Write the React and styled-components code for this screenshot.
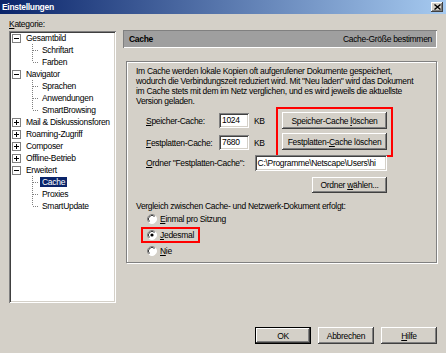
import React from "react"
import styled, { createGlobalStyle } from "styled-components"

const GlobalStyle = createGlobalStyle`
html, body {
  margin: 0;
  padding: 0;
  background: #d4d0c8;
}
body {
  font-family: "Liberation Sans", Arial, sans-serif;
  font-size: 8.5px;
  letter-spacing: -0.3px;
  color: #000;
}
* { box-sizing: border-box; }
`

const sunken = `
box-shadow: inset 1px 1px #808080, inset -1px -1px #fff, inset 2px 2px #404040, inset -2px -2px #d4d0c8;
`
const raised = `
box-shadow: inset -1px -1px #404040, inset 1px 1px #fff, inset -2px -2px #808080, inset 2px 2px #d4d0c8;
`

const tree = [
    { label: "Gesamtbild", open: true, children: ["Schriftart", "Farben"] },
    { label: "Navigator", open: true, children: ["Sprachen", "Anwendungen", "SmartBrowsing"] },
    { label: "Mail & Diskussionsforen" },
    { label: "Roaming-Zugriff" },
    { label: "Composer" },
    { label: "Offline-Betrieb" },
    { label: "Erweitert", open: true, children: ["Cache", "Proxies", "SmartUpdate"] },
]

const Expander = ({ open }) => (
    <svg width="9" height="9" viewBox="0 0 9 9">
        <rect x="0.5" y="0.5" width="8" height="8" fill="#fff" stroke="#808080" />
        <line x1="2" y1="4.5" x2="7" y2="4.5" stroke="#000" />
        {!open && <line x1="4.5" y1="2" x2="4.5" y2="7" stroke="#000" />}
    </svg>
)

const Branch = ({ last }) => (
    <svg width="8" height="12" viewBox="0 0 8 12">
        <line x1="0.5" y1="0" x2="0.5" y2={last ? 6 : 12} stroke="#808080" strokeDasharray="1 1" />
        <line x1="1" y1="6.5" x2="6" y2="6.5" stroke="#808080" strokeDasharray="1 1" />
    </svg>
)

const Radio = ({ checked }) => (
    <svg width="10" height="10" viewBox="0 0 10 10">
        <circle cx="5" cy="5" r="4.5" fill="#fff" />
        <path d="M1.8 8.2 A4.5 4.5 0 0 1 8.2 1.8" fill="none" stroke="#808080" />
        <path d="M2.5 7.5 A3.5 3.5 0 0 1 7.5 2.5" fill="none" stroke="#404040" />
        <path d="M8.2 1.8 A4.5 4.5 0 0 1 1.8 8.2" fill="none" stroke="#fff" />
        {checked && <circle cx="5" cy="5" r="1.6" fill="#000" />}
    </svg>
)

const App = () => {
    return (
        <>
            <GlobalStyle />
            <Window>
                <TitleBar>
                    <TitleText>Einstellungen</TitleText>
                    <CloseButton>
                        <svg width="7" height="6" viewBox="0 0 7 6">
                            <path d="M0.5 0.5 L6.5 5.5 M6.5 0.5 L0.5 5.5" stroke="#000" strokeWidth="1.4" />
                        </svg>
                    </CloseButton>
                </TitleBar>
                <Main>
                    <LeftColumn>
                        <CategoryLabel><U>K</U>ategorie:</CategoryLabel>
                        <TreeBox>
                            {tree.map(node => (
                                <React.Fragment key={node.label}>
                                    <TreeRow>
                                        <Expander open={node.open} />
                                        <TreeText>{node.label}</TreeText>
                                    </TreeRow>
                                    {node.open && node.children.map((child, i) => (
                                        <TreeRow key={child} $child>
                                            <Branch last={i === node.children.length - 1} />
                                            <TreeText $child $selected={child === "Cache"}>{child}</TreeText>
                                        </TreeRow>
                                    ))}
                                </React.Fragment>
                            ))}
                        </TreeBox>
                    </LeftColumn>
                    <RightColumn>
                        <PanelHeader>
                            <HeaderTitle>Cache</HeaderTitle>
                            <span>Cache-Größe bestimmen</span>
                        </PanelHeader>
                        <GroupBox>
                            <Fields>
                                <Description>
                                    <Line>Im Cache werden lokale Kopien oft aufgerufener Dokumente gespeichert,</Line>
                                    <Line>wodurch die Verbindungszeit reduziert wird. Mit "Neu laden" wird das Dokument</Line>
                                    <Line>im Cache stets mit dem im Netz verglichen, und es wird jeweils die aktuellste</Line>
                                    <Line>Version geladen.</Line>
                                </Description>
                                <CacheRow>
                                    <SizeFields>
                                        <SizeField>
                                            <FieldLabel $width={73}><U>S</U>peicher-Cache:</FieldLabel>
                                            <Field $width={30} $height={15}>1024</Field>
                                            <Unit>KB</Unit>
                                        </SizeField>
                                        <SizeField>
                                            <FieldLabel $width={73}><U>F</U>estplatten-Cache:</FieldLabel>
                                            <Field $width={30} $height={15}>7680</Field>
                                            <Unit>KB</Unit>
                                        </SizeField>
                                    </SizeFields>
                                    <Marked>
                                        <ButtonStack>
                                            <Button $width={105} $height={17}>Speicher-Cache <U>l</U>öschen</Button>
                                            <Button $width={105} $height={17}>Festplatten-<U>C</U>ache löschen</Button>
                                        </ButtonStack>
                                    </Marked>
                                </CacheRow>
                                <FolderRow>
                                    <FieldLabel $width={109}><U>O</U>rdner "Festplatten-Cache":</FieldLabel>
                                    <Field $width={133} $height={16}>C:\Programme\Netscape\Users\hi</Field>
                                </FolderRow>
                                <ChooseRow>
                                    <Button $width={75} $height={16}>Ordner <U>w</U>ählen...</Button>
                                </ChooseRow>
                            </Fields>
                            <CompareLabel>Vergleich zwischen Cache- und Netzwerk-Dokument erfolgt:</CompareLabel>
                            <RadioList>
                                <RadioRow>
                                    <Radio />
                                    <span><U>E</U>inmal pro Sitzung</span>
                                </RadioRow>
                                <RadioRow $marked>
                                    <Radio checked />
                                    <span><U>J</U>edesmal</span>
                                </RadioRow>
                                <RadioRow>
                                    <Radio />
                                    <span><U>N</U>ie</span>
                                </RadioRow>
                            </RadioList>
                        </GroupBox>
                    </RightColumn>
                </Main>
                <Footer>
                    <Button $width={56} $height={17} $default>OK</Button>
                    <Button $width={56} $height={17}>Abbrechen</Button>
                    <Button $width={56} $height={17}><U>H</U>ilfe</Button>
                </Footer>
            </Window>
        </>
    )
}

const Window = styled.div`
width: 446px;
height: 353px;
background: #d4d0c8;
display: flex;
flex-direction: column;
overflow: hidden;
`;

const TitleBar = styled.div`
height: 14px;
flex-shrink: 0;
display: flex;
align-items: center;
justify-content: space-between;
padding: 0 3px 0 2px;
background: linear-gradient(to right, #0a246a, #a6caf0);
`;

const TitleText = styled.span`
color: #fff;
font-weight: bold;
font-size: 8.5px;
`;

const CloseButton = styled.div`
width: 12px;
height: 10px;
display: flex;
align-items: center;
justify-content: center;
background: #d4d0c8;
${raised}
`;

const U = styled.span`
text-decoration: underline;
`;

const Main = styled.div`
display: flex;
gap: 7px;
padding: 0 9px;
height: 289px;
flex-shrink: 0;
`;

const LeftColumn = styled.div`
width: 107px;
display: flex;
flex-direction: column;
`;

const CategoryLabel = styled.div`
margin-top: 4px;
height: 12px;
line-height: 12px;
`;

const TreeBox = styled.div`
margin-top: 1px;
height: 272px;
background: #fff;
padding: 1px 0 0 3px;
overflow: hidden;
${sunken}
`;

const TreeRow = styled.div`
display: flex;
align-items: center;
height: 12px;
padding-left: ${p => p.$child ? 20 : 0}px;
white-space: nowrap;
`;

const TreeText = styled.span`
margin-left: ${p => p.$child ? 0 : 3}px;
line-height: 10px;
padding: 0 2px;
${p => p.$selected && `
background: #0a246a;
color: #fff;
`}
`;

const RightColumn = styled.div`
width: 314px;
display: flex;
flex-direction: column;
`;

const PanelHeader = styled.div`
margin-top: 16px;
height: 18px;
display: flex;
align-items: center;
justify-content: space-between;
padding: 0 5px 0 6px;
background: #9f9f9f;
box-shadow: inset 1px 1px #808080, inset -1px -1px #fff;
`;

const HeaderTitle = styled.span`
font-weight: bold;
`;

const GroupBox = styled.div`
margin: 13px 0 0 3px;
width: 311px;
height: 202px;
border: 1px solid #808080;
box-shadow: inset 1px 1px #fff, 1px 1px #fff;
padding: 4px 0 0 9px;
`;

const Fields = styled.div`
width: 251px;
`;

const Description = styled.div`
line-height: 10px;
white-space: nowrap;
`;

const Line = styled.div``;

const CacheRow = styled.div`
margin-top: 6px;
display: flex;
justify-content: space-between;
align-items: flex-start;
`;

const SizeFields = styled.div`
padding: 1px 0 0 10px;
display: flex;
flex-direction: column;
gap: 7px;
`;

const SizeField = styled.div`
display: flex;
align-items: center;
height: 15px;
`;

const FieldLabel = styled.span`
width: ${p => p.$width}px;
white-space: nowrap;
`;

const Field = styled.div`
width: ${p => p.$width}px;
height: ${p => p.$height}px;
line-height: ${p => p.$height}px;
background: #fff;
padding-left: 3px;
white-space: nowrap;
overflow: hidden;
${sunken}
`;

const Unit = styled.span`
margin-left: 5px;
`;

const Marked = styled.div`
border: 2px solid #ff0000;
margin: -5px -6px -7px;
padding: 3px 4px 5px;
`;

const ButtonStack = styled.div`
display: flex;
flex-direction: column;
gap: 4px;
`;

const Button = styled.button`
width: ${p => p.$width}px;
height: ${p => p.$height}px;
padding: 0;
border: none;
background: #d4d0c8;
font: inherit;
letter-spacing: inherit;
color: #000;
white-space: nowrap;
${p => p.$default
        ? `box-shadow: inset 0 0 0 1px #000, inset -2px -2px #404040, inset 2px 2px #fff, inset -3px -3px #808080;`
        : raised}
`;

const FolderRow = styled.div`
margin-top: 5px;
display: flex;
align-items: center;
padding-left: 10px;
`;

const ChooseRow = styled.div`
margin-top: 6px;
display: flex;
justify-content: flex-end;
`;

const CompareLabel = styled.div`
margin-top: 8px;
line-height: 10px;
white-space: nowrap;
`;

const RadioList = styled.div`
display: flex;
flex-direction: column;
`;

const RadioRow = styled.div`
display: flex;
align-items: center;
gap: 3px;
height: 16px;
width: fit-content;
margin-left: 5px;
padding: 0 4px;
border: 2px solid ${p => p.$marked ? "#ff0000" : "transparent"};
`;

const Footer = styled.div`
display: flex;
justify-content: flex-end;
gap: 7px;
padding: 24px 9px 0;
`;

export default App
